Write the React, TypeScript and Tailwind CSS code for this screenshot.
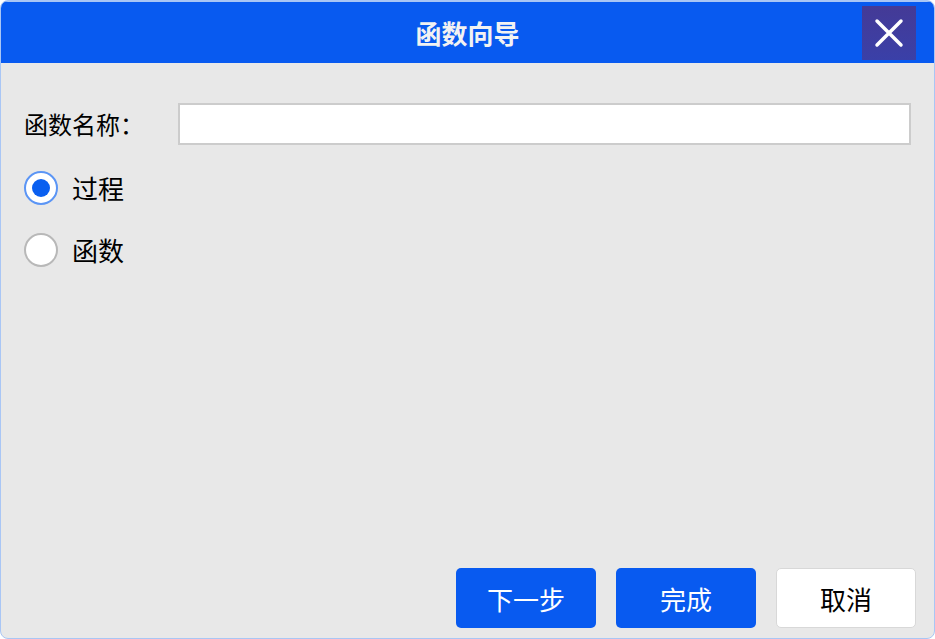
import React, { useState } from 'react';

const font = { fontFamily: '"Noto Sans CJK SC", "Microsoft YaHei", sans-serif' };

const Radio: React.FC<{ checked: boolean; label: string; onClick: () => void }> = ({ checked, label, onClick }) => (
  <button type="button" onClick={onClick} className="flex items-center gap-[14px] h-[34px]">
    <span
      className={`flex h-[34px] w-[34px] items-center justify-center rounded-full bg-white border-2 ${
        checked ? 'border-[#5b95f5]' : 'border-[#b8b8b8]'
      }`}
    >
      {checked && <span className="h-[18px] w-[18px] rounded-full bg-[#0a5ff0]" />}
    </span>
    <span className="text-[26px] leading-none text-black">{label}</span>
  </button>
);

export default function App() {
  const [kind, setKind] = useState<'proc' | 'func'>('proc');
  const [name, setName] = useState('');

  return (
    <div className="h-[639px] w-[935px] bg-white" style={font}>
      <div className="flex h-full w-full flex-col overflow-hidden rounded-[8px] border border-[#a9c6f5] bg-[#e8e8e8]">
        {/* Title bar */}
        <div className="relative flex h-[62px] items-center justify-center bg-[#085af0] border-t border-[#a9c6f5]">
          <span className="text-[26px] font-bold text-[#f2f2f2]">函数向导</span>
          <button
            type="button"
            className="absolute right-[18px] top-[4px] flex h-[54px] w-[54px] items-center justify-center bg-gradient-to-b from-[#443a96] to-[#3a40a8]"
          >
            <svg width="30" height="30" viewBox="0 0 30 30" fill="none">
              <path d="M3 3 L27 27 M27 3 L3 27" stroke="white" strokeWidth="3.5" strokeLinecap="round" />
            </svg>
          </button>
        </div>

        {/* Body */}
        <div className="flex flex-1 flex-col px-[23px] pt-[40px]">
          <div className="flex items-center">
            <span className="w-[154px] text-[24px] text-black">函数名称：</span>
            <input
              value={name}
              onChange={(e) => setName(e.target.value)}
              className="h-[42px] flex-1 border-2 border-[#cccccc] bg-white px-2 text-[20px] outline-none"
            />
          </div>
          <div className="mt-[26px] flex flex-col gap-[28px]">
            <Radio checked={kind === 'proc'} label="过程" onClick={() => setKind('proc')} />
            <Radio checked={kind === 'func'} label="函数" onClick={() => setKind('func')} />
          </div>

          <div className="mt-auto mb-[10px] -mr-[5px] flex justify-end gap-[20px]">
            <button className="h-[60px] w-[140px] rounded-[5px] bg-[#085af0] text-[26px] text-white">下一步</button>
            <button className="h-[60px] w-[140px] rounded-[5px] bg-[#085af0] text-[26px] text-white">完成</button>
            <button className="h-[60px] w-[140px] rounded-[5px] border border-[#d8d8d8] bg-white text-[26px] text-black">
              取消
            </button>
          </div>
        </div>
      </div>
    </div>
  );
}
